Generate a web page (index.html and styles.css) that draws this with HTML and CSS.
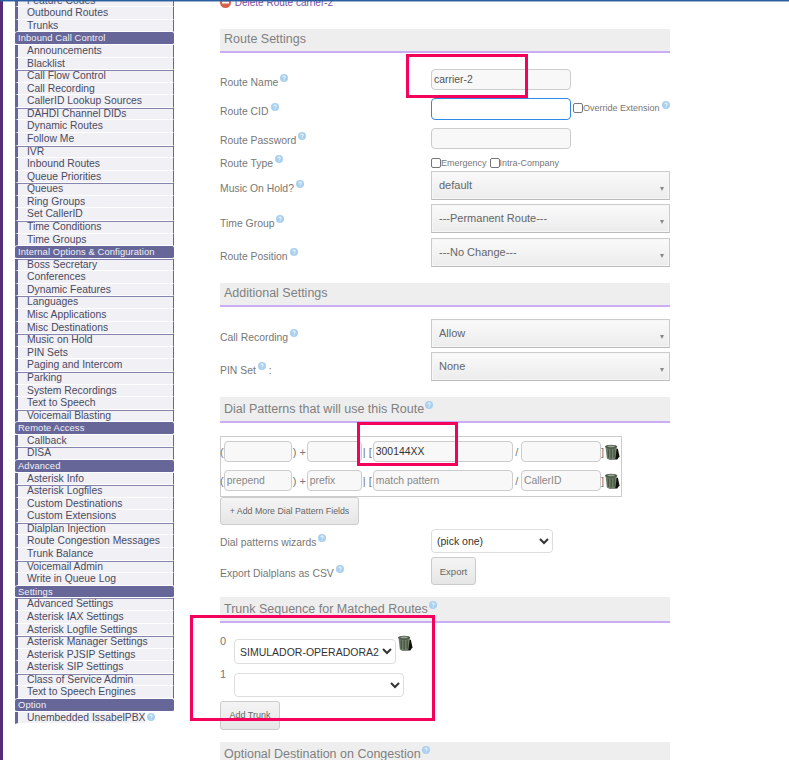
FILE: index.html
```html
<!DOCTYPE html>
<html lang="en">
<head>
  <meta charset="UTF-8">
  <title>IssabelPBX - Outbound Routes</title>
  <link rel="stylesheet" href="styles.css">
</head>
<body>
  <svg class="defs" width="0" height="0">
    <symbol id="help" viewBox="0 0 8 8">
      <circle cx="4" cy="4" r="4" fill="#a9d0ee"/>
      <path d="M2.800 3.100c0-1.500 2.500-1.500 2.500 0 0 .9-1.200.9-1.200 1.700M4.100 5.600v.8" fill="none" stroke="#fff" stroke-width=".9"/>
    </symbol>
    <symbol id="trash" viewBox="0 0 14 15">
      <path d="M3 4.500h9.500l1.500 7-2 3H4z" fill="#111"/>
      <path d="M1 3.500 2.200 13.500c1.500 1.200 6.600 1.200 8 0L11.500 3.500z" fill="#6f7f68"/>
      <path d="M3.500 5v8M6.200 5v8.500M9 5v8" stroke="#3f4a3b" stroke-width="1"/>
      <ellipse cx="6.200" cy="2.600" rx="5.800" ry="2" fill="#4d5a48"/>
      <ellipse cx="6.200" cy="2.200" rx="3.500" ry=".9" fill="#9aa893"/>
    </symbol>
  </svg>

  <div class="topline"></div>
  <div class="page">
    <div class="strip"></div>

    <nav class="sidebar">
      <a class="item">Feature Codes</a>
      <a class="item">Outbound Routes</a>
      <a class="item">Trunks</a>
      <div class="group">Inbound Call Control</div>
      <a class="item">Announcements</a>
      <a class="item">Blacklist</a>
      <a class="item">Call Flow Control</a>
      <a class="item">Call Recording</a>
      <a class="item">CallerID Lookup Sources</a>
      <a class="item">DAHDI Channel DIDs</a>
      <a class="item">Dynamic Routes</a>
      <a class="item">Follow Me</a>
      <a class="item">IVR</a>
      <a class="item">Inbound Routes</a>
      <a class="item">Queue Priorities</a>
      <a class="item">Queues</a>
      <a class="item">Ring Groups</a>
      <a class="item">Set CallerID</a>
      <a class="item">Time Conditions</a>
      <a class="item">Time Groups</a>
      <div class="group">Internal Options &amp; Configuration</div>
      <a class="item">Boss Secretary</a>
      <a class="item">Conferences</a>
      <a class="item">Dynamic Features</a>
      <a class="item">Languages</a>
      <a class="item">Misc Applications</a>
      <a class="item">Misc Destinations</a>
      <a class="item">Music on Hold</a>
      <a class="item">PIN Sets</a>
      <a class="item">Paging and Intercom</a>
      <a class="item">Parking</a>
      <a class="item">System Recordings</a>
      <a class="item">Text to Speech</a>
      <a class="item">Voicemail Blasting</a>
      <div class="group">Remote Access</div>
      <a class="item">Callback</a>
      <a class="item">DISA</a>
      <div class="group">Advanced</div>
      <a class="item">Asterisk Info</a>
      <a class="item">Asterisk Logfiles</a>
      <a class="item">Custom Destinations</a>
      <a class="item">Custom Extensions</a>
      <a class="item">Dialplan Injection</a>
      <a class="item">Route Congestion Messages</a>
      <a class="item">Trunk Balance</a>
      <a class="item">Voicemail Admin</a>
      <a class="item">Write in Queue Log</a>
      <div class="group">Settings</div>
      <a class="item">Advanced Settings</a>
      <a class="item">Asterisk IAX Settings</a>
      <a class="item">Asterisk Logfile Settings</a>
      <a class="item">Asterisk Manager Settings</a>
      <a class="item">Asterisk PJSIP Settings</a>
      <a class="item">Asterisk SIP Settings</a>
      <a class="item">Class of Service Admin</a>
      <a class="item">Text to Speech Engines</a>
      <div class="group">Option</div>
      <div class="unembedded"><a class="item">Unembedded IssabelPBX</a><svg class="help"><use href="#help"/></svg></div>
    </nav>

    <main class="content">
      <a class="delete">
        <svg class="delete-icon" viewBox="0 0 11 11"><circle cx="5.500" cy="5.500" r="5.500" fill="#d9604f"/><rect x="2" y="4.500" width="7" height="2" fill="#fff"/></svg>
        Delete Route carrier-2
      </a>

      <h3 class="section first">Route Settings</h3>

      <div class="row row-name">
        <label>Route Name<svg class="help"><use href="#help"/></svg></label>
        <div><input class="text" type="text" value="carrier-2"></div>
      </div>
      <div class="row row-cid">
        <label>Route CID<svg class="help"><use href="#help"/></svg></label>
        <div class="inline">
          <input class="text focused" type="text">
          <span class="check"><i class="box"></i>Override Extension</span><svg class="help"><use href="#help"/></svg>
        </div>
      </div>
      <div class="row row-pass">
        <label>Route Password<svg class="help"><use href="#help"/></svg></label>
        <div><input class="text" type="password"></div>
      </div>
      <div class="row row-type">
        <label class="flat">Route Type<svg class="help"><use href="#help"/></svg></label>
        <div class="inline">
          <span class="check"><i class="box"></i>Emergency</span>
          <span class="check second"><i class="box"></i>Intra-Company</span>
        </div>
      </div>
      <div class="row row-sel row-music">
        <label>Music On Hold?<svg class="help"><use href="#help"/></svg></label>
        <div class="fake-select">default</div>
      </div>
      <div class="row row-sel row-time">
        <label>Time Group<svg class="help"><use href="#help"/></svg></label>
        <div class="fake-select">---Permanent Route---</div>
      </div>
      <div class="row row-sel row-extra">
        <label>Route Position<svg class="help"><use href="#help"/></svg></label>
        <div class="fake-select">---No Change---</div>
      </div>

      <h3 class="section">Additional Settings</h3>

      <div class="row row-sel row-extra first-sel">
        <label>Call Recording<svg class="help"><use href="#help"/></svg></label>
        <div class="fake-select">Allow</div>
      </div>
      <div class="row row-sel row-extra">
        <label>PIN Set<svg class="help"><use href="#help"/></svg> :</label>
        <div class="fake-select">None</div>
      </div>

      <h3 class="section tall">Dial Patterns that will use this Route<svg class="help"><use href="#help"/></svg></h3>

      <div class="patterns">
        <div class="pattern">
          <span>(</span><input class="text w-prepend" type="text"><span class="sep">) +</span>
          <input class="text w-prefix" type="text"><span class="sep">| [</span>
          <input class="text w-match dark" type="text" value="300144XX"><span class="sep slash">/</span>
          <input class="text w-caller" type="text"><span>]</span>
          <svg class="trash"><use href="#trash"/></svg>
        </div>
        <div class="pattern">
          <span>(</span><input class="text w-prepend" type="text" placeholder="prepend"><span class="sep">) +</span>
          <input class="text w-prefix" type="text" placeholder="prefix"><span class="sep">| [</span>
          <input class="text w-match" type="text" placeholder="match pattern"><span class="sep slash">/</span>
          <input class="text w-caller" type="text" placeholder="CallerID"><span>]</span>
          <svg class="trash"><use href="#trash"/></svg>
        </div>
      </div>
      <button class="btn btn-add">+ Add More Dial Pattern Fields</button>

      <div class="row row-wizard">
        <label>Dial patterns wizards<svg class="help"><use href="#help"/></svg></label>
        <div><select class="native wizard"><option>(pick one)</option></select></div>
      </div>
      <div class="row row-export">
        <label>Export Dialplans as CSV<svg class="help"><use href="#help"/></svg></label>
        <div><button class="btn btn-export">Export</button></div>
      </div>

      <h3 class="section tall">Trunk Sequence for Matched Routes<svg class="help"><use href="#help"/></svg></h3>

      <div class="trunk trunk-0">
        <span class="num">0</span>
        <select class="native sel-0"><option>SIMULADOR-OPERADORA2</option></select>
        <svg class="trash"><use href="#trash"/></svg>
      </div>
      <div class="trunk trunk-1">
        <span class="num">1</span>
        <select class="native sel-1"><option></option></select>
      </div>
      <button class="btn btn-trunk">Add Trunk</button>

      <h3 class="section tall last">Optional Destination on Congestion<svg class="help"><use href="#help"/></svg></h3>
    </main>
  </div>

  <!-- red boxes drawn over the screenshot -->
  <div class="mark mark-name"></div>
  <div class="mark mark-pattern"></div>
  <div class="mark mark-trunk"></div>
</body>
</html>
```

FILE: styles.css
```css
* { box-sizing: border-box; }

html, body {
  margin: 0;
  height: 760px;
  overflow: hidden;
}

body {
  position: relative;
  background: #fff;
  color: #777;
  font-family: "Liberation Sans", Arial, sans-serif;
  font-size: 10.4px;
}

.defs { position: absolute; }

.topline {
  position: relative;
  z-index: 1;
  height: 1px;
  background: #2b5d9e;
  box-shadow: 0 1px 0 rgba(43, 93, 158, .45);
}

.page {
  display: flex;
  height: 759px;
  overflow: hidden;
}

.strip {
  width: 3px;
  flex: none;
  background: #542b78;
}

/* sidebar */
.sidebar {
  width: 159px;
  flex: none;
  margin: -6.4px 0 0 12px;
  display: flex;
  flex-direction: column;
}

.item {
  display: block;
  height: 12.58px;
  line-height: 11.5px;
  padding-left: 9px;
  font-size: 10.35px;
  color: #4a4a60;
  background: #f1f0f5;
  border-left: 3px solid #666699;
  border-right: 1px solid #666699;
  border-bottom: 1px solid #fff;
  white-space: nowrap;
}

.item:nth-child(3n+1) { box-shadow: inset 0 1px 0 #8585ad; }

.group {
  height: 12.58px;
  line-height: 12px;
  padding-left: 3px;
  font-size: 9.4px;
  letter-spacing: .1px;
  color: #f1f0f5;
  background: #666699;
  border-radius: 2px;
  border-bottom: 1px solid #fff;
  white-space: nowrap;
}

.unembedded {
  display: flex;
  align-items: flex-start;
}

.unembedded .item {
  border-right: 0;
  box-shadow: none;
}

.help {
  width: 8px;
  height: 8px;
  margin: 0 0 0 2px;
  vertical-align: 4px;
}

.unembedded .help { margin-top: 1px; }

/* main column */
.content {
  width: 450px;
  flex: none;
  margin-left: 46px;
}

.delete {
  display: block;
  height: 32px;
  margin-top: -4px;
  color: #7a4f9e;
  font-size: 10px;
  line-height: 12px;
}

.delete-icon {
  width: 11px;
  height: 11px;
  margin-right: 1px;
  vertical-align: -2px;
}

.section {
  margin: 12px 0 0;
  height: 24px;
  padding-left: 4px;
  font-size: 12.5px;
  font-weight: normal;
  line-height: 20px;
  color: #808080;
  background: #eeeeee;
  border-bottom: 2px solid #c9aef5;
}

.section.first { margin-top: 0; }
.section.tall { height: 26px; line-height: 24px; }
.section.last { height: 30px; }

.section .help { margin-left: 1px; }

.row {
  display: grid;
  grid-template-columns: 211px 239px;
  align-items: start;
}

.row label {
  display: block;
  padding-top: 5px;
  line-height: 13px;
}

.row label.flat { margin-top: -2px; padding-top: 0; }

.row-name { margin-top: 16px; height: 29px; }
.row-cid { height: 30px; }
.row-pass { height: 29px; }
.row-pass label { padding-top: 4px; }
.row-type { height: 14px; }
.row-sel { height: 33px; }
.row-sel label { padding-top: 11px; }
.row-music label { padding-top: 9px; }
.row-time { height: 34px; }
.row-extra label { padding-top: 10px; }
.first-sel { margin-top: 12px; }

.inline {
  display: flex;
  align-items: flex-start;
  white-space: nowrap;
}

.text {
  width: 140px;
  height: 21px;
  padding: 0 1px 0 2px;
  font: 10.4px "Liberation Sans", Arial, sans-serif;
  color: #555;
  background: #f8f8f8;
  border: 1px solid #ccc;
  border-radius: 4px;
  outline: 0;
}

.text::placeholder { color: #888; }

.focused {
  height: 22px;
  background: #fff;
  border-color: #2f8ae6;
}

.check {
  display: flex;
  align-items: center;
  margin-left: 2px;
  font-size: 9px;
  line-height: 12px;
}

.row-type .check { margin-left: 0; }
.row-type .check.second { margin-left: 3px; }

.box {
  width: 10px;
  height: 10px;
  background: #fff;
  border: 1px solid #777;
  border-radius: 2px;
}

.row-cid .check { margin-top: 4px; }
.row-cid .inline .help { margin-top: 3px; }

.fake-select {
  position: relative;
  height: 29px;
  padding-left: 7px;
  font-size: 11px;
  line-height: 26px;
  color: #666;
  background: linear-gradient(#fafafa, #ececec);
  border: 1px solid #ccc;
  border-bottom-color: #bbb;
  box-shadow: inset 0 0 0 1px #f6f6f6;
}

.fake-select::after {
  content: "";
  position: absolute;
  right: 5px;
  top: 15px;
  border: 2.500px solid transparent;
  border-top: 4px solid #888;
  border-bottom: 0;
}

/* dial patterns */
.patterns {
  width: 402px;
  height: 61px;
  margin-top: 13px;
  padding: 4px 0 0 0;
  border: 1px solid #ccc;
}

.pattern {
  display: flex;
  align-items: center;
  height: 21px;
  margin: 0 0 8px -1px;
  white-space: nowrap;
}

.pattern span { font-size: 11px; }

.sep { padding: 0 1px; }
.slash { padding: 0 2.500px; }
.w-prepend { width: 68px; }
.w-prefix { width: 55px; }
.w-match { width: 140px; }
.w-caller { width: 80px; }
.dark { color: #333; }

.trash {
  width: 16px;
  height: 16px;
  flex: none;
}

.btn {
  display: block;
  font: 9.500px "Liberation Sans", Arial, sans-serif;
  color: #666;
  background: linear-gradient(#f4f4f4, #e6e6e6);
  border: 1px solid #ccc;
  border-radius: 3px;
  padding: 0;
}

.btn-add { width: 139px; height: 28px; font-size: 8.800px; }
.btn-export { width: 45px; height: 28px; }
.btn-trunk { width: 60px; height: 29px; padding-bottom: 2px; font-size: 9px; }

.native {
  height: 24px;
  padding-left: 1px;
  font: 10.500px "Liberation Sans", Arial, sans-serif;
  color: #333;
  background: #fff;
  border: 1px solid #ddd;
  border-radius: 4px;
  outline: 0;
}

.wizard { width: 122px; }

.row-wizard { height: 28px; margin-top: 4px; }
.row-wizard label { padding-top: 5px; }
.row-export { height: 28px; }
.row-export label { padding-top: 8px; }

.trunk {
  display: flex;
  align-items: flex-start;
  font-size: 11px;
}

.num { width: 14px; margin-top: -2px; }
.sel-0 { width: 162px; height: 25px; margin-top: 2px; }
.sel-1 { width: 170px; height: 24px; }
.trunk-0 { margin-top: 14px; height: 36px; }
.trunk-0 .trash { margin: -2px 0 0 1px; }
.trunk-1 { height: 28px; }
.trunk-1 .num { margin-top: -5px; }

/* annotation boxes */
.mark {
  position: absolute;
  border: 3px solid #f5005a;
}

.mark-name { left: 406px; top: 54px; width: 122px; height: 44px; }
.mark-pattern { left: 357px; top: 422px; width: 101px; height: 44px; }
.mark-trunk { left: 190px; top: 615px; width: 245px; height: 106px; }
```
